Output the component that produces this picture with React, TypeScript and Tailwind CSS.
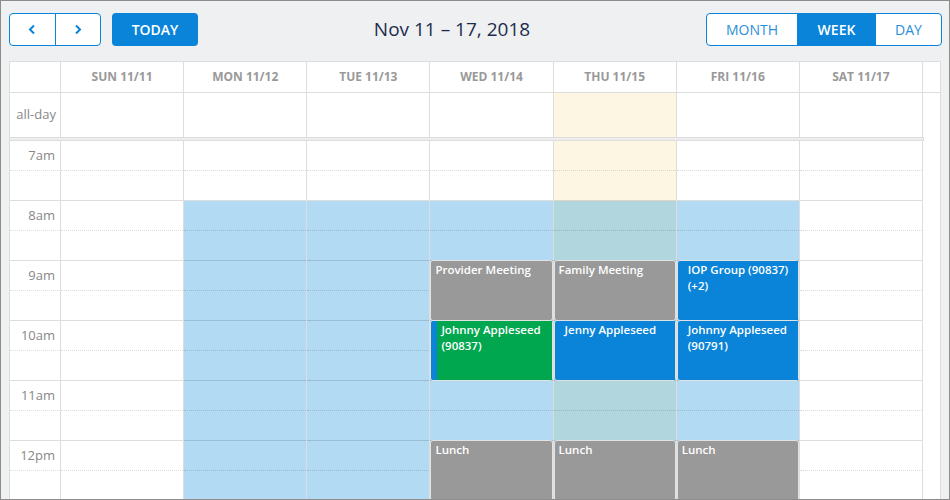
import React from "react";

const days = [
  { label: "SUN 11/11", biz: false, today: false },
  { label: "MON 11/12", biz: true, today: false },
  { label: "TUE 11/13", biz: true, today: false },
  { label: "WED 11/14", biz: true, today: false },
  { label: "THU 11/15", biz: true, today: true },
  { label: "FRI 11/16", biz: true, today: false },
  { label: "SAT 11/17", biz: false, today: false },
];

const hours = ["7am", "8am", "9am", "10am", "11am", "12pm"];

type Ev = {
  day: number;
  top: number;
  title: string;
  color: "gray" | "blue" | "green";
};

const events: Ev[] = [
  { day: 3, top: 119, title: "Provider Meeting", color: "gray" },
  { day: 4, top: 119, title: "Family Meeting", color: "gray" },
  { day: 5, top: 119, title: "IOP Group (90837) (+2)", color: "blue" },
  { day: 3, top: 179, title: "Johnny Appleseed (90837)", color: "green" },
  { day: 4, top: 179, title: "Jenny Appleseed", color: "blue" },
  { day: 5, top: 179, title: "Johnny Appleseed (90791)", color: "blue" },
  { day: 3, top: 299, title: "Lunch", color: "gray" },
  { day: 4, top: 299, title: "Lunch", color: "gray" },
  { day: 5, top: 299, title: "Lunch", color: "gray" },
];

const Chevron = ({ flip }: { flip?: boolean }) => (
  <svg width="8" height="11" viewBox="0 0 8 11" className={flip ? "rotate-180" : ""}>
    <polyline points="6,1.5 2,5.5 6,9.5" fill="none" stroke="#0984d8" strokeWidth="2" />
  </svg>
);

const slotBg = (d: (typeof days)[number], slot: number) => {
  const inBiz = d.biz && slot >= 2;
  if (d.today && inBiz) return "bg-[#b1d6de]";
  if (d.today) return "bg-[#fcf6e3]";
  if (inBiz) return "bg-[#b3daf3]";
  return "bg-white";
};

const EventBox = ({ ev }: { ev: Ev }) => {
  if (ev.color === "gray") {
    return (
      <div
        className="absolute left-0 right-0 h-[61px] rounded-[3px] bg-[#999999] border border-[#e2e2e2] px-[4px] pt-[1px] text-[11.5px] leading-[16px] font-semibold text-white"
        style={{ top: ev.top }}
      >
        {ev.title}
      </div>
    );
  }
  return (
    <div
      className="absolute left-0 right-0 h-[61px] rounded-[3px] bg-[#0984d8] border border-[#e2e2e2] pl-[6px] flex"
      style={{ top: ev.top }}
    >
      <div
        className={`flex-1 pl-[4px] pr-[4px] pt-[1px] text-[11.5px] leading-[16px] font-semibold text-white ${
          ev.color === "green" ? "bg-[#00a74f]" : "bg-[#0984d8]"
        }`}
      >
        {ev.title}
      </div>
    </div>
  );
};

export default function App() {
  return (
    <div
      className="w-[950px] h-[500px] overflow-hidden border border-[#8c8c8c] bg-[#eff0f2] pt-[12px] pl-[8px] pr-[8px]"
      style={{ fontFamily: '"Open Sans", "Liberation Sans", sans-serif' }}
    >
      {/* toolbar */}
      <div className="flex items-center justify-between h-[33px] w-[933px]">
        <div className="flex items-center gap-[11px]">
          <div className="flex h-[33px] w-[92px] rounded-[4px] border border-[#0984d8] bg-white overflow-hidden">
            <button className="flex-1 flex items-center justify-center border-r border-[#0984d8]">
              <Chevron />
            </button>
            <button className="flex-1 flex items-center justify-center">
              <Chevron flip />
            </button>
          </div>
          <button className="h-[33px] w-[86px] rounded-[4px] bg-[#0984d8] text-white text-[14px] font-semibold">
            TODAY
          </button>
        </div>
        <h2 className="text-[19px] text-[#1c2d4c]">Nov 11 – 17, 2018</h2>
        <div className="flex h-[33px] rounded-[4px] border border-[#0984d8] bg-white overflow-hidden text-[14px]">
          <button className="w-[90px] text-[#2a8fd9]">MONTH</button>
          <button className="w-[79px] bg-[#0984d8] text-white font-semibold">WEEK</button>
          <button className="w-[65px] text-[#2a8fd9]">DAY</button>
        </div>
      </div>

      {/* calendar */}
      <div className="mt-[15px] w-[932px] h-[450px] border border-[#dddddd] bg-white overflow-hidden">
        {/* header */}
        <div className="grid grid-cols-[51px_repeat(7,1fr)_17px] h-[31px] border-b border-[#dddddd]">
          <div className="border-r border-[#dddddd]" />
          {days.map((d) => (
            <div
              key={d.label}
              className="border-r border-[#dddddd] flex items-center justify-center text-[12px] font-bold text-[#999999]"
            >
              {d.label}
            </div>
          ))}
          <div />
        </div>

        {/* all-day */}
        <div className="grid grid-cols-[51px_repeat(7,1fr)_17px] h-[44px]">
          <div className="border-r border-[#dddddd] flex items-center justify-end pr-[4px] text-[13px] text-[#888888]">
            all-day
          </div>
          {days.map((d) => (
            <div
              key={d.label}
              className={`border-r border-[#dddddd] ${d.today ? "bg-[#fcf6e3]" : "bg-white"}`}
            />
          ))}
          <div />
        </div>
        <div className="grid grid-cols-[51px_repeat(7,1fr)_17px]">
          <div className="col-span-8 h-[4px] border-y border-[#dddddd] bg-[#eeeeee]" />
          <div className="border-l border-[#dddddd]" />
        </div>

        {/* time grid */}
        <div className="grid grid-cols-[51px_repeat(7,1fr)_17px]">
          <div className="flex flex-col border-r border-[#dddddd]">
            {hours.map((h) => (
              <React.Fragment key={h}>
                <div className="h-[30px] border-b border-dotted border-[#dddddd] flex items-center justify-end pr-[5px] text-[13px] text-[#888888]">
                  {h}
                </div>
                <div className="h-[30px] border-b border-[#dddddd]" />
              </React.Fragment>
            ))}
          </div>
          {days.map((d, di) => (
            <div key={d.label} className="relative flex flex-col border-r border-[#dddddd]">
              {Array.from({ length: 12 }).map((_, s) => (
                <div
                  key={s}
                  className={`h-[30px] border-b ${
                    s % 2 === 0 ? "border-dotted border-[rgba(0,0,0,0.14)]" : "border-[rgba(0,0,0,0.13)]"
                  } ${slotBg(d, s)}`}
                />
              ))}
              {events
                .filter((e) => e.day === di)
                .map((e, i) => (
                  <EventBox key={i} ev={e} />
                ))}
            </div>
          ))}
          <div />
        </div>
      </div>
    </div>
  );
}
